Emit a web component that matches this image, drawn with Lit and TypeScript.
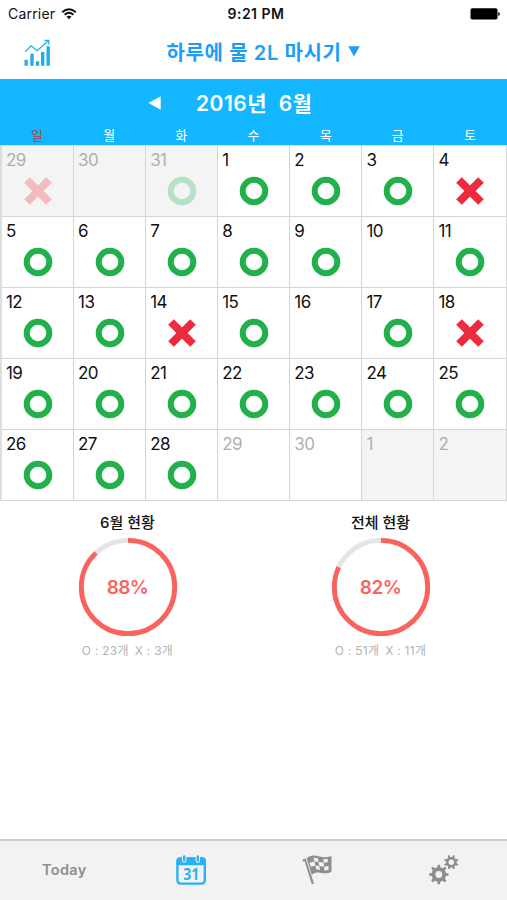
import { LitElement, html, svg, css, nothing } from "lit";
import { customElement, property } from "lit/decorators.js";

type Mark = "o" | "x" | "";
interface Day { n: number; mark: Mark; kind: "cur" | "out" | "future"; }

const WEEK = ["일", "월", "화", "수", "목", "금", "토"];
const PAST: Day[] = [
  { n: 29, mark: "x", kind: "out" },
  { n: 30, mark: "", kind: "out" },
  { n: 31, mark: "o", kind: "out" },
];
const MISSED = [4, 14, 18];
const EMPTY = [10, 16];
const JUNE: Day[] = Array.from({ length: 30 }, (_, i) => {
  const n = i + 1;
  if (n > 28) return { n, mark: "", kind: "future" };
  return { n, mark: MISSED.includes(n) ? "x" : EMPTY.includes(n) ? "" : "o", kind: "cur" };
});
const NEXT: Day[] = [{ n: 1, mark: "", kind: "out" }, { n: 2, mark: "", kind: "out" }];
const DAYS = [...PAST, ...JUNE, ...NEXT];

const gear = (cx: number, cy: number, turn: number, outer: number, root: number, hole: number) => {
  const teeth = 8;
  const pts: string[] = [];
  const step = (Math.PI * 2) / teeth;
  for (let i = 0; i < teeth; i++) {
    const a = (i + turn) * step - Math.PI / 2;
    for (const [f, r] of [[-0.27, root], [-0.14, outer], [0.14, outer], [0.27, root]]) {
      pts.push(`${(cx + r * Math.cos(a + f * step)).toFixed(2)} ${(cy + r * Math.sin(a + f * step)).toFixed(2)}`);
    }
  }
  return `M${pts.join("L")}ZM${cx - hole} ${cy}a${hole} ${hole} 0 1 0 ${hole * 2} 0a${hole} ${hole} 0 1 0 ${-hole * 2} 0Z`;
};

@customElement("day-cell")
export class DayCell extends LitElement {
  @property({ attribute: false }) day!: Day;
  static styles = css`
    :host { display: block; box-sizing: border-box; border-right: 1.5px solid #d6d6d6; border-bottom: 1.5px solid #d6d6d6; }
    .cell { height: 100%; box-sizing: border-box; padding: 4px 0 0 4px; color: #111; }
    .out { background: #f4f4f4; color: #b0b0b0; }
    .future { color: #b0b0b0; }
    .num { height: 21px; line-height: 21px; font-size: 17px; letter-spacing: -0.6px; }
    svg { display: block; margin: 5px 0 0 17px; }
    .out svg { opacity: 0.28; }
  `;
  render() {
    const d = this.day;
    return html`<div class="cell ${d.kind}">
      <div class="num">${d.n}</div>
      ${d.mark ? html`<svg width="30" height="30" viewBox="-15 -15 30 30">
        ${d.mark === "o"
          ? svg`<circle r="11.3" fill="none" stroke="#22b04b" stroke-width="6"/>`
          : svg`<path d="M-11-11 11 11M11-11-11 11" stroke="#ee2a3e" stroke-width="8"/>`}
      </svg>` : nothing}
    </div>`;
  }
}

@customElement("stat-ring")
export class StatRing extends LitElement {
  @property() label = "";
  @property({ type: Number }) percent = 0;
  @property() good = "";
  @property() bad = "";
  static styles = css`
    :host { display: flex; flex-direction: column; align-items: center; }
    .label { height: 20px; line-height: 20px; margin-top: 12px; font-size: 15px; font-weight: 500; color: #111; white-space: nowrap; }
    .ring { display: grid; place-items: center; margin-top: 4px; height: 100px; }
    .ring > * { grid-area: 1 / 1; }
    .pct { font-size: 19px; font-weight: 600; color: #f8635e; letter-spacing: -0.6px; }
    .detail { display: flex; gap: 6px; height: 16px; line-height: 16px; margin-top: 6px; font-size: 12px; letter-spacing: 0.25px; color: #b3b3b3; white-space: pre; }
  `;
  render() {
    return html`<div class="label">${this.label}</div>
      <div class="ring">
        <svg width="100" height="100" viewBox="-50 -50 100 100">
          <circle r="46.7" fill="none" stroke="#e5e5e5" stroke-width="4.8"/>
          <circle r="46.7" fill="none" stroke="#fc625d" stroke-width="4.8" pathLength="100" stroke-dasharray="${this.percent} 100" transform="rotate(-90)"/>
        </svg>
        <span class="pct">${this.percent}%</span>
      </div>
      <div class="detail"><span>O : ${this.good}개</span><span>X : ${this.bad}개</span></div>`;
  }
}

@customElement("app-root")
export class AppRoot extends LitElement {
  static styles = css`
    :host { display: flex; flex-direction: column; width: 507px; height: 900px; overflow: hidden; background: #fff; color: #111; font-family: Inter, "Noto Sans CJK KR", sans-serif; }
    .status { display: grid; grid-template-columns: 1fr auto 1fr; align-items: center; height: 27px; box-sizing: border-box; padding: 0 7px 0 8px; font-size: 14px; }
    .carrier { display: flex; align-items: center; gap: 6px; letter-spacing: 0.2px; }
    .time { font-size: 14px; font-weight: 600; letter-spacing: 0.5px; padding-left: 4px; }
    .battery { justify-self: end; }
    .nav { display: grid; grid-template-columns: 76px 1fr 76px; align-items: center; height: 52px; }
    .chart { margin-left: 23px; }
    .title { display: flex; align-items: center; justify-content: center; gap: 7px; margin: 0 0 3px 20px; font-size: 20px; letter-spacing: 0.6px; font-weight: 600; color: #1c9ef8; white-space: nowrap; }
    .head { height: 66px; background: #13b6ff; color: #fff; }
    .month { display: flex; align-items: center; height: 48px; padding-left: 148px; font-size: 21px; font-weight: 600; letter-spacing: 0.5px; }
    .month span { margin: 0 0 2px 35px; white-space: pre; }
    .week { display: grid; grid-template-columns: repeat(7, 72.15px); padding-left: 1px; height: 18px; line-height: 17px; font-size: 13px; text-align: center; }
    .sun { color: #a0484e; }
    .days { display: grid; grid-template-columns: repeat(6, 72.08px) 72.6px; grid-template-rows: repeat(5, 71.1px); border-left: 2px solid #dedede; box-sizing: border-box; border-top: 1px solid #dedede; }
    .stats { display: grid; grid-template-columns: 253px 253px; flex: 1; padding-left: 1px; }
    .tabs { display: grid; grid-template-columns: repeat(4, 1fr); place-items: center; height: 61px; box-sizing: border-box; padding: 0 0 2px 1px; border-top: 2px solid #cdcdcd; background: #f2f2f2; color: #8e8e8e; }
    .today { font-size: 14.5px; font-weight: 600; letter-spacing: 0.3px; }
    svg { display: block; }
  `;
  render() {
    return html`
      <div class="status">
        <div class="carrier"><span>Carrier</span>
          <svg width="16" height="12" viewBox="0 0 15 12" fill="none" stroke="#111" stroke-width="1.9">
            <path d="M.7 4.2Q7.5-1.9 14.3 4.2M3.1 6.8Q7.5 2.8 11.9 6.8"/>
            <path d="M5 8.6Q7.5 6.7 10 8.6L7.5 11.2Z" fill="#111" stroke="none"/>
          </svg>
        </div>
        <div class="time">9:21 PM</div>
        <svg class="battery" width="30" height="12" viewBox="0 0 30 12"><rect x=".5" y=".2" width="27" height="11.4" rx="1.8"/><path d="M28.2 4q1.6.3 1.6 2t-1.6 2Z"/></svg>
      </div>
      <div class="nav">
        <svg class="chart" width="28" height="28" viewBox="0 0 28 28" fill="#22aeea">
          <path d="M1.5 20.8h3.3v6H1.5ZM7.3 14.8h3.4v12H7.3ZM12.8 22.3h3.4v4.5h-3.4ZM18 13h3.4v13.8H18ZM23.5 7.2h3.4v19.6h-3.4Z"/>
          <path d="M2.2 12.7 8.2 6.8 14.2 11.6 25.6 1.5M21.3 1.4h4.5v4.4" fill="none" stroke="#22aeea" stroke-width="1.2"/>
        </svg>
        <div class="title"><span>하루에 물 2L 마시기</span>
          <svg width="12" height="11" viewBox="0 0 12 11"><path d="M.3.2h11.4L6 10.5Z" fill="#1c9ef8"/></svg>
        </div>
      </div>
      <div class="head">
        <div class="month">
          <svg width="13" height="14" viewBox="0 0 13 14"><path d="M12.7.2v13.6L.4 7Z" fill="#fff"/></svg>
          <span>2016년  6월</span>
        </div>
        <div class="week">${WEEK.map((w, i) => html`<span class=${i ? "" : "sun"}>${w}</span>`)}</div>
      </div>
      <div class="days">${DAYS.map((d) => html`<day-cell .day=${d}></day-cell>`)}</div>
      <div class="stats">
        <stat-ring label="6월 현황" percent="88" good="23" bad="3"></stat-ring>
        <stat-ring label="전체 현황" percent="82" good="51" bad="11"></stat-ring>
      </div>
      <div class="tabs">
        <span class="today">Today</span>
        <svg width="30" height="30" viewBox="0 0 30 30">
          <rect x="1.4" y="3.5" width="27.4" height="25.1" rx="3" fill="none" stroke="#28b2f3" stroke-width="2.4"/>
          <path d="M.5 10.3V5.3Q.5 2.5 3.3 2.5h23.600Q29.800 2.500 29.800 5.300v5Z" fill="#28b2f3"/>
          <path d="M8.200 1.500v4M21.800 1.500v4" stroke="#f2f2f2" stroke-width="4.400" stroke-linecap="round"/>
          <path d="M8.200 1.500v4M21.800 1.500v4" stroke="#28b2f3" stroke-width="2.400" stroke-linecap="round"/>
          <text x="15.200" y="24.800" text-anchor="middle" font-family="Open Sans" font-weight="700" font-size="16" textLength="16" lengthAdjust="spacingAndGlyphs" fill="#28b2f3">31</text>
        </svg>
        <svg width="30" height="30" viewBox="0 0 30 30" fill="#8e8e8e">
          <path d="M.5 4.600 3.700 3.500 12 28.500 9.800 29.300 2.700 6.200 1.100 6.500Z"/>
          <path d="M4.700 3.500C8.500-.5 13.500.3 17.500 1.600 21.500 2.900 25.500 2.200 29.500 1V16.500C25.500 19.200 21.500 18.300 18 17.700 14.500 17.100 12 17.500 9.900 20Z"/>
          <path fill="#f2f2f2" d="M11.500 2.700 16 3.200 16.500 6.800 12.400 6.500ZM21.200 4.200 25.800 3.700V7.200L21.700 7.800ZM7.500 7.700 12.400 6.500 13.400 10.500 8.900 11.700ZM16.500 6.800 21.700 7.800 22 11.800 17.400 11ZM13.400 10.500 17.400 11 17.900 14.900 14.200 14.300ZM22 11.800 26.500 11V14.700L22.500 15.800Z"/>
        </svg>
        <svg width="30" height="30" viewBox="0 0 30 30" fill="#8e8e8e" fill-rule="evenodd">
          <path d=${gear(9.8, 19.5, 0, 9.8, 7.3, 3.4)}/>
          <path d=${gear(22.3, 7.2, 0.5, 7.4, 5.4, 2.7)}/>
        </svg>
      </div>`;
  }
}
